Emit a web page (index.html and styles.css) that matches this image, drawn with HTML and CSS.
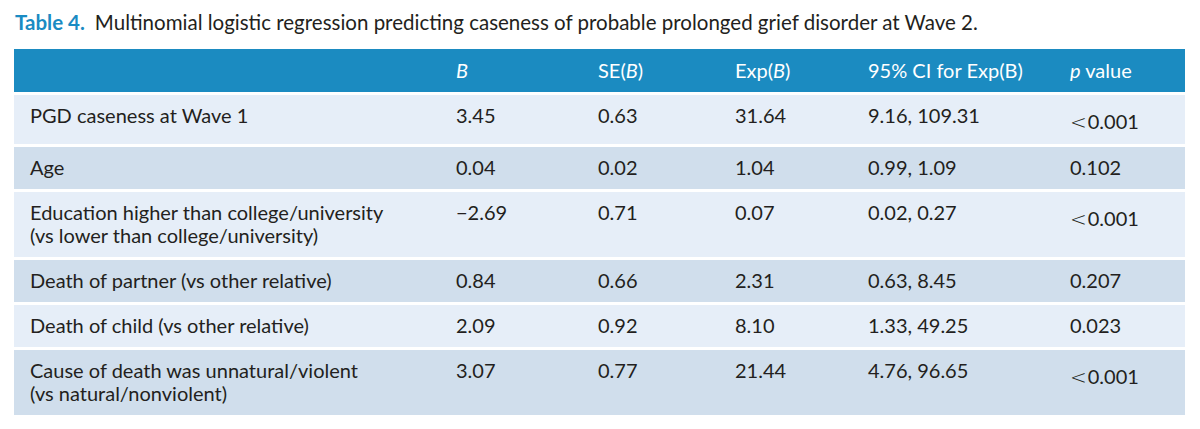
FILE: index.html
```html
<!DOCTYPE html>
<html lang="en">
<head>
<meta charset="utf-8">
<title>Table 4</title>
<link rel="stylesheet" href="styles.css">
</head>
<body>
<div class="wrap">
  <p class="caption"><span class="label">Table 4.</span>Multinomial logistic regression predicting caseness of probable prolonged grief disorder at Wave 2.</p>
  <table class="results">
    <colgroup>
      <col class="c-name"><col class="c-b"><col class="c-se"><col class="c-exp"><col class="c-ci"><col class="c-p">
    </colgroup>
    <thead>
      <tr>
        <th></th>
        <th><i>B</i></th>
        <th>SE(<i>B</i>)</th>
        <th>Exp(<i>B</i>)</th>
        <th>95% CI for Exp(B)</th>
        <th><i>p</i> value</th>
      </tr>
    </thead>
    <tbody>
      <tr class="light">
        <td>PGD caseness at Wave 1</td><td>3.45</td><td>0.63</td><td>31.64</td><td>9.16, 109.31</td><td class="low"><span class="lt">&lt;</span>0.001</td>
      </tr>
      <tr class="dark">
        <td>Age</td><td>0.04</td><td>0.02</td><td>1.04</td><td>0.99, 1.09</td><td>0.102</td>
      </tr>
      <tr class="light">
        <td>Education higher than college/university<br>(vs lower than college/university)</td><td>−2.69</td><td>0.71</td><td>0.07</td><td>0.02, 0.27</td><td class="low"><span class="lt">&lt;</span>0.001</td>
      </tr>
      <tr class="dark">
        <td>Death of partner (vs other relative)</td><td>0.84</td><td>0.66</td><td>2.31</td><td>0.63, 8.45</td><td>0.207</td>
      </tr>
      <tr class="light">
        <td>Death of child (vs other relative)</td><td>2.09</td><td>0.92</td><td>8.10</td><td>1.33, 49.25</td><td>0.023</td>
      </tr>
      <tr class="dark">
        <td>Cause of death was unnatural/violent<br>(vs natural/nonviolent)</td><td>3.07</td><td>0.77</td><td>21.44</td><td>4.76, 96.65</td><td class="low"><span class="lt">&lt;</span>0.001</td>
      </tr>
    </tbody>
  </table>
</div>
</body>
</html>
```
FILE: styles.css
```css
html, body {
  margin: 0;
  padding: 0;
  background: #ffffff;
}

body {
  font-family: Lato, "Open Sans", "Liberation Sans", sans-serif;
  color: #231f20;
}

.wrap {
  padding: 10px 15px 0 14px;
}

.caption {
  margin: 0 0 0 1px;
  font-size: 20.5px;
  line-height: 24px;
  color: #231f20;
}

.caption .label {
  color: #1a8bc3;
  font-weight: 700;
  margin-right: 10px;
}

.results {
  margin-top: 15px;
  width: 1171px;
  table-layout: fixed;
  border-collapse: collapse;
  font-size: 20px;
}

.c-name { width: 426px; }
.c-b { width: 142px; }
.c-se { width: 137px; }
.c-exp { width: 133px; }
.c-ci { width: 202px; }
.c-p { width: 131px; }

.results th {
  background: #1b8bc1;
  color: #ffffff;
  font-weight: 400;
  text-align: left;
  height: 43px;
  padding: 0 0 0 16px;
  line-height: 23px;
  vertical-align: middle;
}

.results td {
  padding: 9px 0 10px 16px;
  line-height: 23px;
  vertical-align: top;
  border-top: 3px solid #ffffff;
  white-space: nowrap;
}

.results td.low {
  padding-top: 15px;
}

.results .lt {
  font-family: "DejaVu Sans", sans-serif;
  font-weight: 300;
  font-size: 20px;
  margin-right: 1px;
}

.results tr.light td {
  background: #e6eef8;
}

.results tr.dark td {
  background: #d0deec;
}
```
